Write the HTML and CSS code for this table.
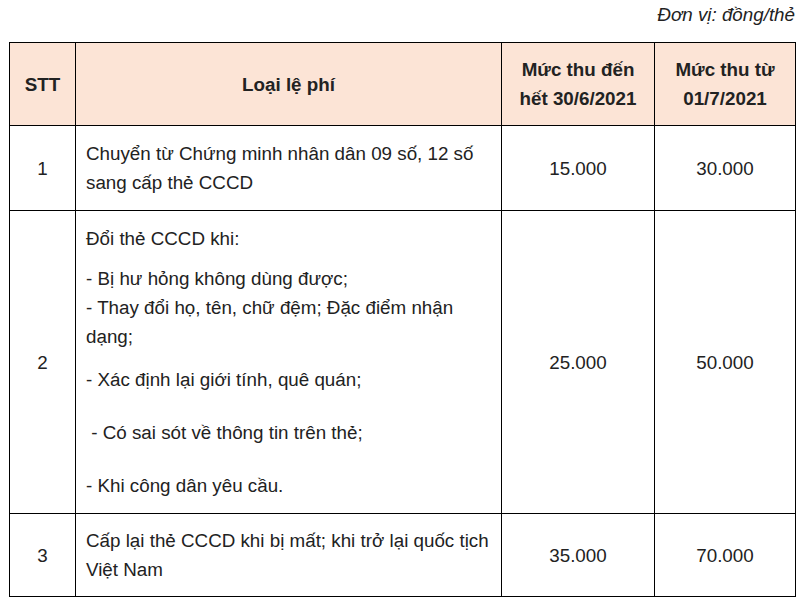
FILE: index.html
```html
<!DOCTYPE html>
<html lang="vi">
<head>
<meta charset="utf-8">
<link rel="stylesheet" href="styles.css">
</head>
<body>
<div class="page">
  <p class="unit">Đơn vị: đồng/thẻ</p>
  <table class="fees">
    <colgroup>
      <col class="c1"><col class="c2"><col class="c3"><col class="c4">
    </colgroup>
    <thead>
      <tr class="head">
        <th>STT</th>
        <th>Loại lệ phí</th>
        <th>Mức thu đến<br>hết 30/6/2021</th>
        <th>Mức thu từ<br>01/7/2021</th>
      </tr>
    </thead>
    <tbody>
      <tr class="r1">
        <td class="num">1</td>
        <td class="desc">Chuyển từ Chứng minh nhân dân 09 số, 12 số sang cấp thẻ CCCD</td>
        <td class="num">15.000</td>
        <td class="num">30.000</td>
      </tr>
      <tr class="r2">
        <td class="num">2</td>
        <td class="desc">
          <p class="p0">Đổi thẻ CCCD khi:</p>
          <p class="p1">- Bị hư hỏng không dùng được;<br>- Thay đổi họ, tên, chữ đệm; Đặc điểm nhận dạng;</p>
          <p class="p2">- Xác định lại giới tính, quê quán;</p>
          <p class="p3">&nbsp;- Có sai sót về thông tin trên thẻ;</p>
          <p class="p4">- Khi công dân yêu cầu.</p>
        </td>
        <td class="num">25.000</td>
        <td class="num">50.000</td>
      </tr>
      <tr class="r3">
        <td class="num">3</td>
        <td class="desc">Cấp lại thẻ CCCD khi bị mất; khi trở lại quốc tịch Việt Nam</td>
        <td class="num">35.000</td>
        <td class="num">70.000</td>
      </tr>
    </tbody>
  </table>
</div>
</body>
</html>
```
FILE: styles.css
```css
html, body {
  margin: 0;
  padding: 0;
  background: #fff;
}
.page {
  width: 800px;
  font-family: "Liberation Sans", Arial, sans-serif;
  color: #222;
  font-size: 18.8px;
  line-height: 29px;
}
.unit {
  margin: 0;
  height: 42px;
  padding: 0 5px 0 0;
  text-align: right;
  font-style: italic;
  line-height: 29px;
}
.fees {
  margin-left: 9px;
  border-collapse: collapse;
  table-layout: fixed;
  width: 786px;
  border: 1px solid #222;
}
.c1 { width: 66px; }
.c2 { width: 426px; }
.c3 { width: 153px; }
.c4 { width: 141px; }
.fees th, .fees td {
  border: 1px solid #000;
  padding: 0 10px;
  vertical-align: middle;
}
.fees th {
  background: #fce4d6;
  font-weight: bold;
  text-align: center;
}
.fees td.desc {
  padding-right: 4px;
}
.head { height: 83px; }
.r1 { height: 85px; }
.r2 { height: 303px; }
.r3 { height: 83px; }
.num { text-align: center; }
.desc { text-align: left; }
.desc p { margin: 0; }
.p1 { margin-top: 11px !important; }
.p2 { margin-top: 14px !important; }
.p3 { margin-top: 24px !important; }
.p4 { margin-top: 24px !important; }
```
